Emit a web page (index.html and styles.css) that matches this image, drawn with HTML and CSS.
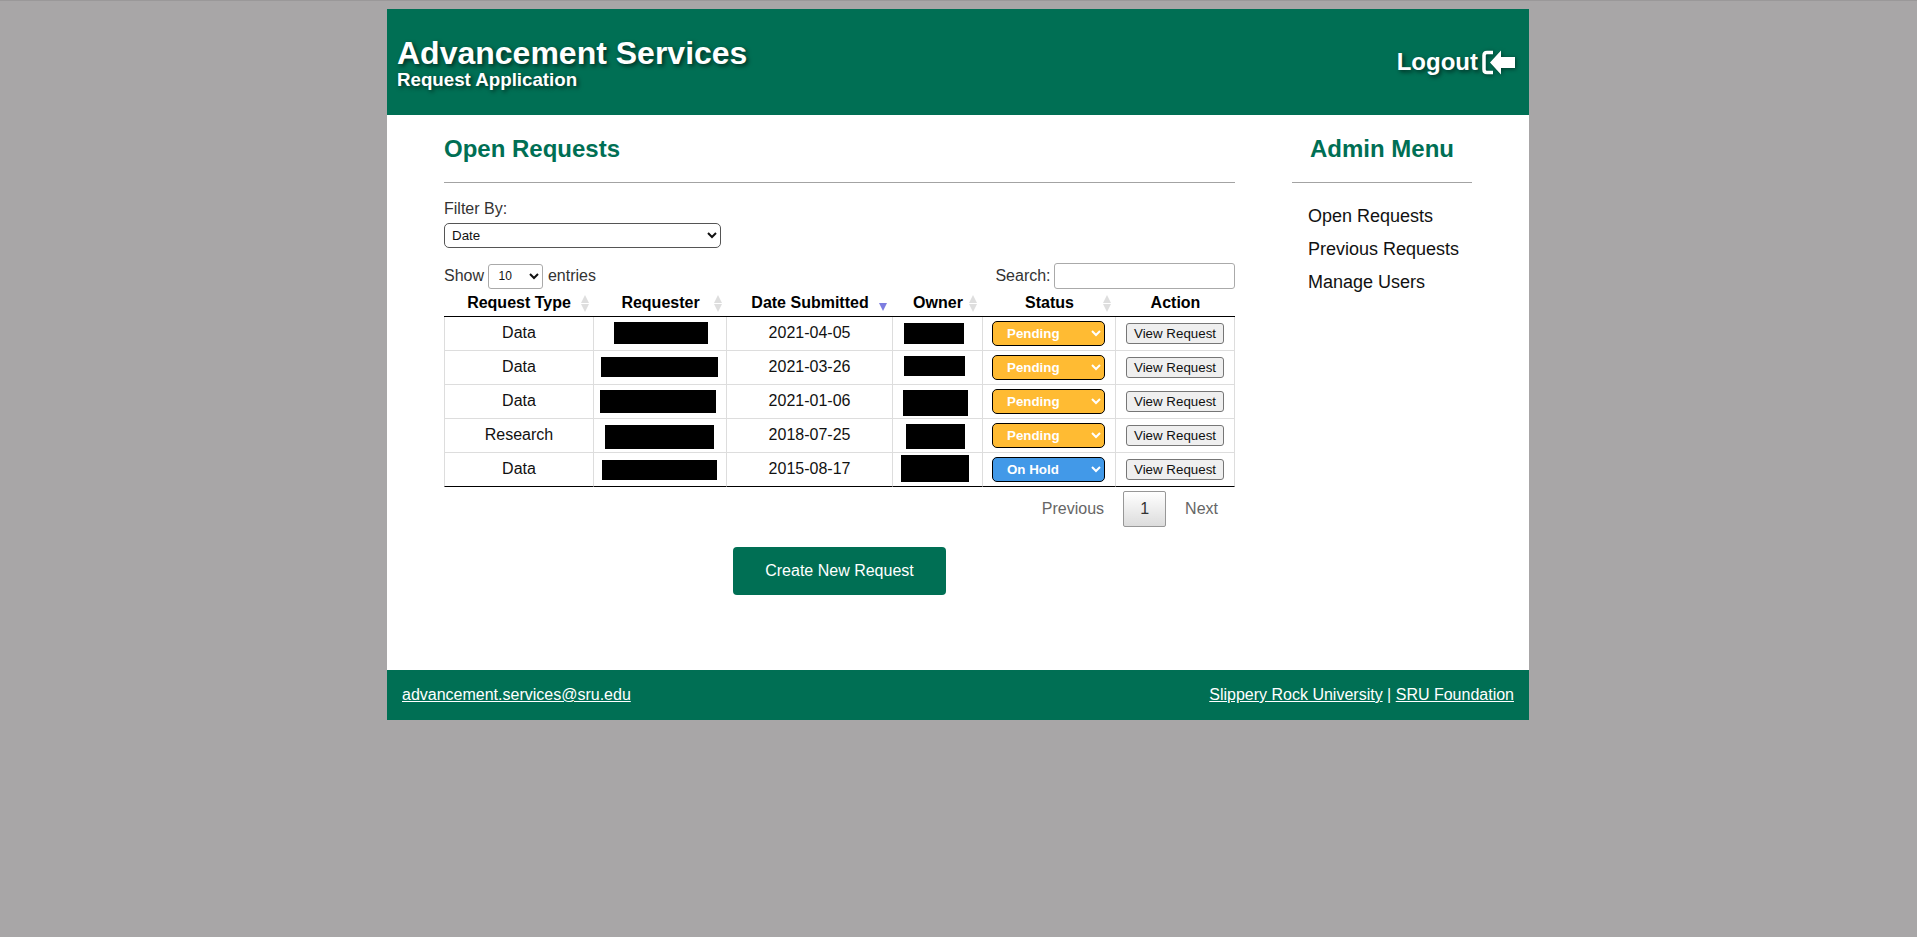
FILE: index.html
```html
<!DOCTYPE html>
<html lang="en">
<head>
    <meta charset="UTF-8">
    <meta name="viewport" content="width=device-width, initial-scale=1.0">
    <title>Advancement Services - Request Application</title>
    <link rel="stylesheet" href="styles.css">
</head>
<body>
    <div class="page">
        <header class="site-header">
            <div class="brand">
                <h1>Advancement Services</h1>
                <div class="subtitle">Request Application</div>
            </div>
            <a class="logout" href="#">Logout
                <svg class="logout-icon" viewBox="0 0 33 25" width="33" height="25">
                    <path d="M11 2.5H5Q2 2.5 2 5.500V19.500Q2 22.500 5 22.500H11" fill="none" stroke="#fff" stroke-width="3.500"/>
                    <path d="M8 12.500L19 0.500V7H33V18H19V24.500Z" fill="#fff"/>
                </svg>
            </a>
        </header>

        <main class="main">
            <section class="content">
                <h2>Open Requests</h2>
                <hr>
                <label class="filter-label" for="filter">Filter By:</label>
                <select class="filter-select" id="filter">
                    <option>Date</option>
                </select>

                <div class="table-tools">
                    <label>Show
                        <select class="length-select">
                            <option>10</option>
                        </select>
                        entries</label>
                    <label>Search: <input class="search-input" type="search"></label>
                </div>

                <table class="requests">
                    <colgroup>
                        <col class="col-type">
                        <col class="col-requester">
                        <col class="col-date">
                        <col class="col-owner">
                        <col class="col-status">
                        <col class="col-action">
                    </colgroup>
                    <thead>
                        <tr>
                            <th class="sortable">Request Type</th>
                            <th class="sortable">Requester</th>
                            <th class="sorted">Date Submitted</th>
                            <th class="sortable owner-head">Owner</th>
                            <th class="sortable">Status</th>
                            <th>Action</th>
                        </tr>
                    </thead>
                    <tbody>
                        <tr>
                            <td class="text-cell">Data</td>
                            <td class="hidden-cell"><span class="redact req-1"></span></td>
                            <td class="text-cell">2021-04-05</td>
                            <td class="hidden-cell"><span class="redact own-1"></span></td>
                            <td><select class="status pending"><option>Pending</option></select></td>
                            <td><button class="view-btn">View Request</button></td>
                        </tr>
                        <tr>
                            <td class="text-cell">Data</td>
                            <td class="hidden-cell"><span class="redact req-2"></span></td>
                            <td class="text-cell">2021-03-26</td>
                            <td class="hidden-cell"><span class="redact own-2"></span></td>
                            <td><select class="status pending"><option>Pending</option></select></td>
                            <td><button class="view-btn">View Request</button></td>
                        </tr>
                        <tr>
                            <td class="text-cell">Data</td>
                            <td class="hidden-cell"><span class="redact req-3"></span></td>
                            <td class="text-cell">2021-01-06</td>
                            <td class="hidden-cell"><span class="redact own-3"></span></td>
                            <td><select class="status pending"><option>Pending</option></select></td>
                            <td><button class="view-btn">View Request</button></td>
                        </tr>
                        <tr>
                            <td class="text-cell">Research</td>
                            <td class="hidden-cell"><span class="redact req-4"></span></td>
                            <td class="text-cell">2018-07-25</td>
                            <td class="hidden-cell"><span class="redact own-4"></span></td>
                            <td><select class="status pending"><option>Pending</option></select></td>
                            <td><button class="view-btn">View Request</button></td>
                        </tr>
                        <tr>
                            <td class="text-cell">Data</td>
                            <td class="hidden-cell"><span class="redact req-5"></span></td>
                            <td class="text-cell">2015-08-17</td>
                            <td class="hidden-cell"><span class="redact own-5"></span></td>
                            <td><select class="status on-hold"><option>On Hold</option></select></td>
                            <td><button class="view-btn">View Request</button></td>
                        </tr>
                    </tbody>
                </table>

                <div class="paging">
                    <a href="#">Previous</a>
                    <a class="current" href="#">1</a>
                    <a href="#">Next</a>
                </div>

                <div class="create-row">
                    <a class="create-btn" href="#">Create New Request</a>
                </div>
            </section>

            <aside class="sidebar">
                <h2>Admin Menu</h2>
                <hr>
                <ul class="side-links">
                    <li><a href="#">Open Requests</a></li>
                    <li><a href="#">Previous Requests</a></li>
                    <li><a href="#">Manage Users</a></li>
                </ul>
            </aside>
        </main>

        <footer class="site-footer">
            <a href="#">advancement.services@sru.edu</a>
            <div><a href="#">Slippery Rock University</a> | <a href="#">SRU Foundation</a></div>
        </footer>
    </div>
</body>
</html>
```

FILE: styles.css
```css
* {
    box-sizing: border-box;
}
body {
    margin: 0;
    border-top: 1px solid #9a9899;
    min-height: 937px;
    background-color: #a8a6a7;
    font-family: "Liberation Sans", Arial, sans-serif;
    font-size: 16px;
    color: #111;
}
.page {
    width: 1142px;
    margin: 8px 0 0 387px;
    background-color: white;
}
.site-header {
    height: 106px;
    padding: 0 14px 0 10px;
    display: flex;
    justify-content: space-between;
    align-items: center;
    background-color: #006f54;
    color: white;
    text-shadow: 2px 2px 4px rgba(0, 0, 0, 0.6);
}
.brand {
    margin-top: 2px;
}
h1 {
    margin: 0;
    font-size: 32px;
    line-height: 34px;
}
.subtitle {
    font-size: 18.720px;
    line-height: 20px;
    font-weight: bold;
}
.logout {
    display: flex;
    align-items: center;
    gap: 4px;
    color: white;
    font-size: 24px;
    font-weight: bold;
    text-decoration: none;
}
.logout-icon {
    filter: drop-shadow(1px 1px 2px rgba(0, 0, 0, 0.5));
}
.main {
    height: 555px;
    padding-left: 57px;
    display: flex;
    gap: 57px;
}
.content {
    width: 791px;
}
.sidebar {
    width: 180px;
}
h2 {
    margin: 20px 0 19px;
    font-size: 24px;
    line-height: 28px;
    color: #006f54;
}
.sidebar h2 {
    text-align: center;
}
hr {
    margin: 0;
    border: none;
    border-top: 1px solid #a3a3a3;
}
.filter-label {
    display: block;
    margin-top: 17px;
    line-height: 18px;
    color: #333;
}
.filter-select {
    display: block;
    width: 277px;
    height: 25px;
    margin-top: 5px;
    padding-left: 3px;
    font-family: inherit;
    font-size: 13.333px;
    background-color: white;
    color: #111;
    border: 1px solid #555;
    border-radius: 5px;
}
.table-tools {
    height: 26px;
    margin-top: 15px;
    display: flex;
    justify-content: space-between;
    align-items: center;
    color: #333;
}
.length-select {
    width: 55px;
    height: 25px;
    padding-left: 5px;
    font-family: inherit;
    font-size: 12px;
    background-color: white;
    color: #111;
    border: 1px solid #aaa;
    border-radius: 3px;
}
.search-input {
    width: 181px;
    height: 26px;
    margin-left: -1px;
    background-color: white;
    border: 1px solid #aaa;
    border-radius: 3px;
}
.requests {
    width: 791px;
    margin-top: 1px;
    table-layout: fixed;
    border-collapse: separate;
    border-spacing: 0;
}
.col-type { width: 150px; }
.col-requester { width: 133px; }
.col-date { width: 166px; }
.col-owner { width: 90px; }
.col-status { width: 133px; }
.col-action { width: 119px; }
.requests th {
    position: relative;
    height: 27px;
    padding: 0 0 1px;
    border-bottom: 1px solid black;
    color: black;
    text-align: center;
}
.requests td {
    height: 34px;
    padding: 0;
    border-right: 1px solid #ddd;
    border-bottom: 1px solid #ddd;
    text-align: center;
}
.requests td:first-child {
    border-left: 1px solid #ddd;
}
.requests tbody tr:last-child td {
    border-bottom-color: black;
}
.requests .text-cell {
    padding-bottom: 2px;
}
/* sort arrows, same look as the datatables images */
.sortable::before,
.sortable::after,
.sorted::after {
    content: "";
    position: absolute;
    right: 5px;
    width: 0;
    height: 0;
    border-left: 4.500px solid transparent;
    border-right: 4.500px solid transparent;
}
.sortable::before {
    top: 5px;
    border-bottom: 8px solid #dedede;
}
.sortable::after {
    top: 14px;
    border-top: 8px solid #dedede;
}
.sorted::after {
    top: 13px;
    right: 6px;
    border-top: 8px solid #7d7de0;
}
.owner-head::before,
.owner-head::after {
    right: 6px;
}
.hidden-cell {
    vertical-align: top;
}
.redact {
    display: block;
    background-color: black;
}
.req-1 { width: 94px; height: 22px; margin: 5px 0 0 20px; }
.req-2 { width: 117px; height: 20px; margin: 6px 0 0 7px; }
.req-3 { width: 116px; height: 23px; margin: 5px 0 0 6px; }
.req-4 { width: 109px; height: 24px; margin: 6px 0 0 11px; }
.req-5 { width: 115px; height: 20px; margin: 7px 0 0 8px; }
.own-1 { width: 60px; height: 21px; margin: 6px 0 0 11px; }
.own-2 { width: 61px; height: 20px; margin: 5px 0 0 11px; }
.own-3 { width: 65px; height: 26px; margin: 5px 0 0 10px; }
.own-4 { width: 59px; height: 25px; margin: 5px 0 0 13px; }
.own-5 { width: 68px; height: 27px; margin: 2px 0 0 8px; }
.status {
    display: block;
    width: 113px;
    height: 25px;
    margin: 0 0 0 9px;
    padding-left: 10px;
    font-family: inherit;
    font-size: 13.333px;
    font-weight: bold;
    color: white;
    border: 1px solid black;
    border-radius: 5px;
}
.pending {
    background-color: #ffbb33;
}
.on-hold {
    background-color: #4299e8;
}
.view-btn {
    display: block;
    width: 98px;
    height: 21px;
    margin: 0 auto;
    padding: 0;
    font-family: inherit;
    font-size: 13.333px;
    color: #111;
    background-color: #efefef;
    border: 1px solid #767676;
    border-radius: 3px;
}
.paging {
    height: 36px;
    margin-top: 4px;
    padding-right: 1px;
    display: flex;
    justify-content: flex-end;
    align-items: center;
}
.paging a {
    padding: 0 16px;
    line-height: 34px;
    color: #666;
    text-decoration: none;
}
.paging .current {
    margin: 0 3px;
    width: 43px;
    height: 36px;
    padding: 0;
    text-align: center;
    color: #333;
    background: linear-gradient(to bottom, white 0%, #dcdcdc 100%);
    border: 1px solid #979797;
    border-radius: 2px;
}
.create-row {
    margin-top: 20px;
    display: flex;
    justify-content: center;
}
.create-btn {
    width: 213px;
    height: 48px;
    line-height: 48px;
    text-align: center;
    color: white;
    text-decoration: none;
    background-color: #006f54;
    border-radius: 4px;
}
.side-links {
    margin: 17px 0 0;
    padding: 0 0 0 16px;
    list-style: none;
    font-size: 18px;
}
.side-links li {
    height: 33px;
    line-height: 33px;
}
.side-links a {
    color: #111;
    text-decoration: none;
}
.site-footer {
    height: 50px;
    padding: 0 15px;
    display: flex;
    justify-content: space-between;
    align-items: center;
    color: white;
    background-color: #006f54;
}
.site-footer a {
    color: white;
}
```
